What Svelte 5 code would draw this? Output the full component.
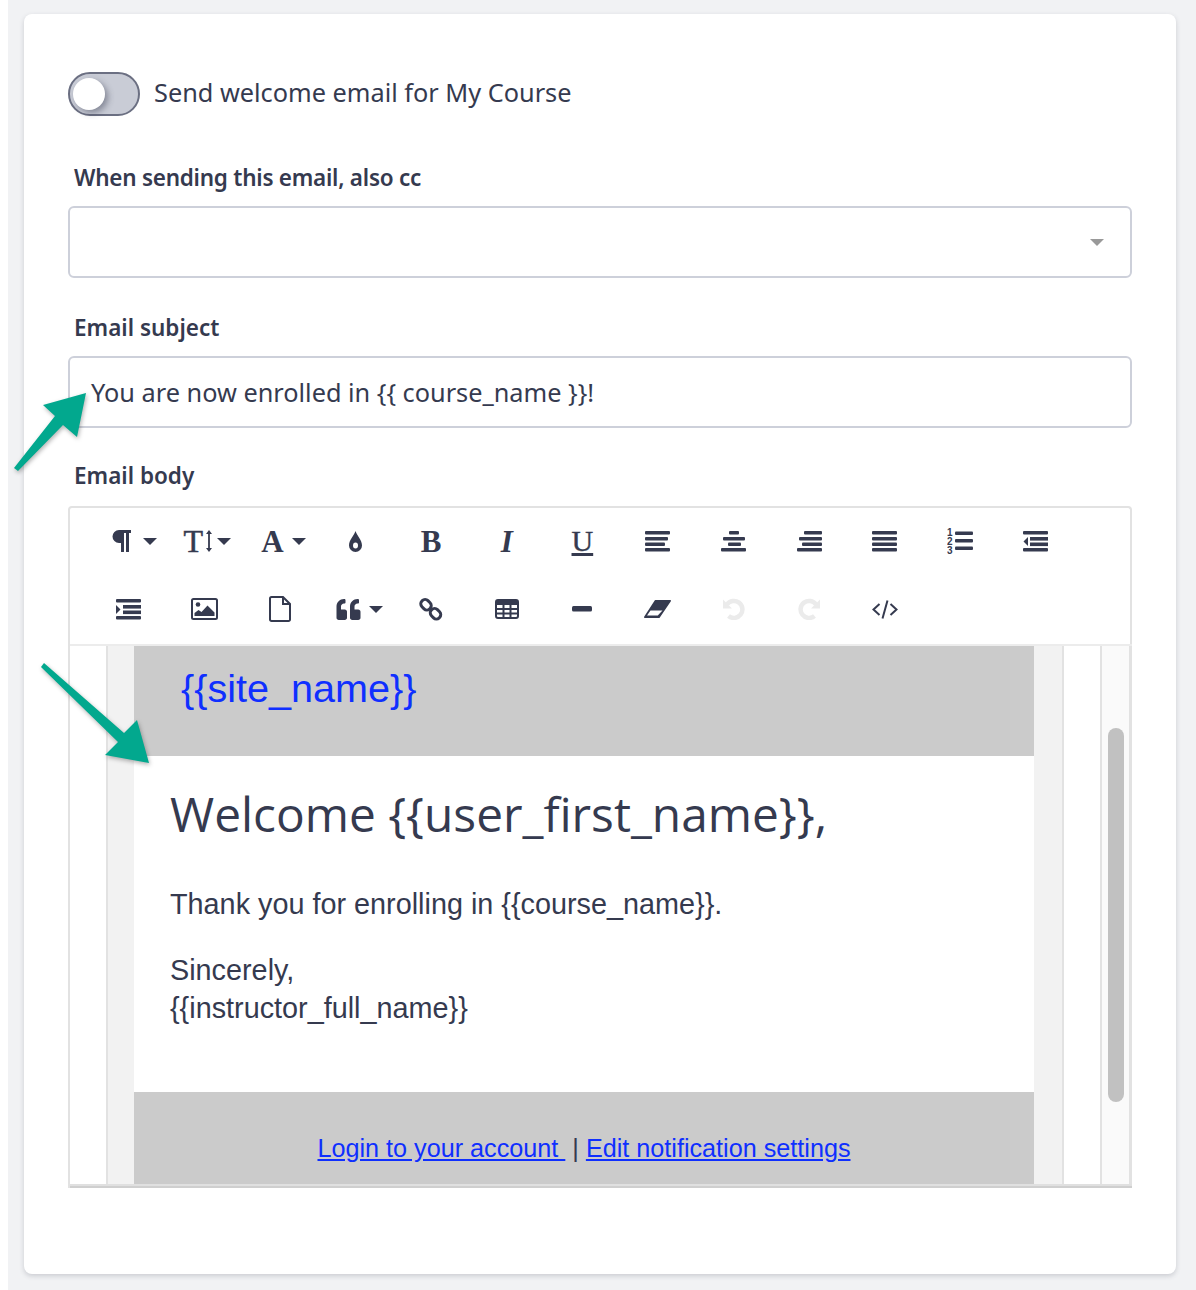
<script>
	const aligns = {
		left: [[0, 25], [0, 23], [0, 20], [0, 25]],
		center: [[8, 18], [2, 24], [7, 20], [0, 25]],
		right: [[7, 25], [2, 25], [5, 25], [0, 25]],
		justify: [[0, 25], [0, 25], [0, 25], [0, 25]]
	};
	const barY = [0, 6, 11.5, 17];
</script>

{#snippet caret()}
	<svg class="caret" width="14" height="7" viewBox="0 0 14 7"><path d="M0 0h14L7 7z" /></svg>
{/snippet}

{#snippet alignIcon(kind)}
	<svg width="25" height="21" viewBox="0 0 25 21">
		{#each aligns[kind] as bar, i}
			<rect x={bar[0]} y={barY[i]} width={bar[1] - bar[0]} height="3.6" rx="1" />
		{/each}
	</svg>
{/snippet}

<div class="page">
	<main class="card">
		<div class="toggle-row">
			<span class="toggle"><span class="knob"></span></span>
			<span class="toggle-label">Send welcome email for My Course</span>
		</div>

		<div class="label cc">When sending this email, also cc</div>
		<div class="field select">
			<svg width="14" height="7" viewBox="0 0 14 7"><path d="M0 0h14L7 7z" /></svg>
		</div>

		<div class="label subject">Email subject</div>
		<div class="field input">You are now enrolled in {'{{'} course_name {'}}'}!</div>

		<div class="label body">Email body</div>
		<div class="editor">
			<div class="toolbar">
				<span class="btn dd pad-para">
					<svg width="19" height="22" viewBox="0 0 19 22">
						<path d="M7 0h12v3h-2v18.500a.5.5 0 0 1-.5.5h-2a.5.5 0 0 1-.5-.5V3h-2v18.500a.5.5 0 0 1-.5.5h-2a.5.5 0 0 1-.5-.5V13H7A6.500 6.500 0 0 1 7 0z" />
					</svg>
					{@render caret()}
				</span>
				<span class="btn dd pad-size">
					<span class="glyph size">T</span>
					<svg class="updown" width="6" height="22" viewBox="0 0 6 22">
						<path d="M3 0l3 4H3.900v14H6l-3 4-3-4h2.100V4H0z" />
					</svg>
					{@render caret()}
				</span>
				<span class="btn dd pad-font"><span class="glyph font">A</span>{@render caret()}</span>
				<span class="btn">
					<svg width="13" height="21" viewBox="0 0 13 21">
						<path d="M6.500 0C8 5 13 9 13 14.500a6.500 6.500 0 0 1-13 0C0 9 5 5 6.500 0z" />
						<ellipse class="cut" cx="6.500" cy="14.500" rx="2.500" ry="3" />
					</svg>
				</span>
				<span class="btn"><span class="glyph bold">B</span></span>
				<span class="btn"><span class="glyph italic">I</span></span>
				<span class="btn"><span class="glyph under">U</span></span>
				<span class="btn">{@render alignIcon('left')}</span>
				<span class="btn">{@render alignIcon('center')}</span>
				<span class="btn">{@render alignIcon('right')}</span>
				<span class="btn">{@render alignIcon('justify')}</span>
				<span class="btn">
					<svg width="26" height="30" viewBox="0 0 26 30">
						<text x="0" y="10" class="num">1</text>
						<text x="0" y="19" class="num">2</text>
						<text x="0" y="28" class="num">3</text>
						<rect x="8" y="5.500" width="18" height="3.600" rx="1" />
						<rect x="8" y="13" width="18" height="3.600" rx="1" />
						<rect x="8" y="20.500" width="18" height="3.600" rx="1" />
					</svg>
				</span>
				<span class="btn">
					<svg width="25" height="21" viewBox="0 0 25 21">
						<rect width="25" height="3.600" rx="1" />
						<rect x="7" y="6" width="18" height="3.600" />
						<rect x="7" y="11.500" width="18" height="3.600" />
						<rect y="17" width="25" height="3.600" rx="1" />
						<path d="M5 6v9L0.500 10.500z" />
					</svg>
				</span>

				<span class="btn">
					<svg width="25" height="21" viewBox="0 0 25 21">
						<rect width="25" height="3.600" rx="1" />
						<rect x="7" y="6" width="18" height="3.600" />
						<rect x="7" y="11.500" width="18" height="3.600" />
						<rect y="17" width="25" height="3.600" rx="1" />
						<path d="M0 6v9l4.500-4.500z" />
					</svg>
				</span>
				<span class="btn">
					<svg width="27" height="22" viewBox="0 0 27 22">
						<rect class="line" x="1" y="1" width="25" height="20" rx="1.500" />
						<circle cx="7" cy="6.500" r="2.300" />
						<path d="M3.500 18v-3l4-3 3 2 6-6.500 7 7V18z" />
					</svg>
				</span>
				<span class="btn">
					<svg width="22" height="26" viewBox="0 0 22 26">
						<path class="line" d="M1 2.500A1.500 1.500 0 0 1 2.500 1H14l7 7v15.500a1.500 1.500 0 0 1-1.500 1.500h-17A1.500 1.500 0 0 1 1 23.500z" />
						<path class="line" d="M14 1v7h7" />
					</svg>
				</span>
				<span class="btn dd pad-quote">
					<svg width="25" height="21" viewBox="0 32 512 448">
						<path d="M464 256h-80v-64c0-35.300 28.700-64 64-64h8c13.300 0 24-10.700 24-24V56c0-13.300-10.700-24-24-24h-8c-88.400 0-160 71.600-160 160v240c0 26.500 21.500 48 48 48h128c26.500 0 48-21.500 48-48V304c0-26.500-21.500-48-48-48zm-288 0H96v-64c0-35.300 28.700-64 64-64h8c13.300 0 24-10.700 24-24V56c0-13.300-10.700-24-24-24h-8C71.600 32 0 103.600 0 192v240c0 26.500 21.500 48 48 48h128c26.500 0 48-21.500 48-48V304c0-26.500-21.500-48-48-48z" />
					</svg>
					{@render caret()}
				</span>
				<span class="btn">
					<svg width="24" height="24" viewBox="0 0 24 24">
						<rect class="line thick" x="1.500" y="3.500" width="11" height="8.500" rx="4" transform="rotate(45 7 7.750)" />
						<rect class="line thick" x="11" y="12.500" width="11" height="8.500" rx="4" transform="rotate(45 16.500 16.750)" />
					</svg>
				</span>
				<span class="btn">
					<svg width="24" height="20" viewBox="0 0 24 20">
						<rect class="line" x="1" y="1" width="22" height="18" rx="2" />
						<rect x="1" y="1" width="22" height="5" />
						<path class="line" d="M1 10h22M1 14.500h22M8.500 6V19M15.500 6V19" />
					</svg>
				</span>
				<span class="btn">
					<svg width="20" height="6" viewBox="0 0 20 6"><rect width="20" height="5.500" rx="1.500" /></svg>
				</span>
				<span class="btn">
					<svg width="27" height="18" viewBox="0 0 27 18">
						<path class="solid" d="M11.500 .8H26.200L15 17.200H.8z" />
						<path class="cut" d="M6.500 10.500h12L13.800 15.500H3z" />
					</svg>
				</span>
				<span class="btn off">
					<svg width="22" height="22" viewBox="0 0 22 22">
						<path class="arc" d="M4 6.500A8.500 8.500 0 1 1 5.500 18" />
						<path d="M0 1.500l9 9H0z" />
					</svg>
				</span>
				<span class="btn off">
					<svg width="22" height="22" viewBox="0 0 22 22">
						<path class="arc" d="M18 6.500A8.500 8.500 0 1 0 16.500 18" />
						<path d="M22 1.500l-9 9h9z" />
					</svg>
				</span>
				<span class="btn">
					<svg width="26" height="19" viewBox="0 0 26 19">
						<path class="code" d="M7.500 4L1.500 9.500l6 5.500M18.500 4l6 5.500-6 5.500M15.500 .5l-5 18" />
					</svg>
				</span>
			</div>

			<div class="frame">
				<div class="gutter"></div>
				<div class="margin"></div>
				<div class="email">
					<div class="email-head">{'{{'}site_name{'}}'}</div>
					<div class="email-main">
						<h1>Welcome {'{{'}user_first_name{'}}'},</h1>
						<p>Thank you for enrolling in {'{{'}course_name{'}}'}.</p>
						<p>Sincerely,<br />{'{{'}instructor_full_name{'}}'}</p>
					</div>
					<div class="email-foot">
						<a href="#login">Login to your account&nbsp;</a> | <a href="#settings">Edit notification settings</a>
					</div>
				</div>
				<div class="margin right"></div>
				<div class="gutter right"></div>
				<div class="track"><div class="thumb"></div></div>
			</div>
		</div>
	</main>

	<!-- annotation arrows drawn over the screenshot -->
	<svg class="arrows" width="200" height="800" viewBox="0 0 200 800">
		<polygon points="14,468 55,416 43,405 86,393 77,437 63,425 18,471" />
		<polygon points="44,663 124,733 137,720 149,763 105,755 118,742 41,667" />
	</svg>
</div>

<style>
	:global(body) {
		margin: 0;
		background: #fff;
	}

	.page {
		position: relative;
		box-sizing: border-box;
		width: 1188px;
		height: 1290px;
		margin-left: 8px;
		padding: 14px 20px 16px 16px;
		background: #f1f2f4;
		font-family: "Noto Sans", sans-serif;
		color: #353a4f;
	}

	.card {
		box-sizing: border-box;
		height: 1260px;
		padding: 58px 44px 0;
		background: #fff;
		border-radius: 8px;
		box-shadow: 0 2px 5px rgba(50, 55, 75, 0.2);
	}

	.toggle-row {
		display: flex;
		align-items: center;
		gap: 14px;
		height: 44px;
	}

	.toggle {
		box-sizing: border-box;
		display: block;
		position: relative;
		width: 72px;
		height: 44px;
		border: 2px solid #6b6f82;
		border-radius: 22px;
		background: #c9ccd6;
	}

	.knob {
		position: absolute;
		left: 3px;
		top: 4px;
		width: 32px;
		height: 32px;
		border-radius: 50%;
		background: #fff;
		box-shadow: 3px 3px 6px rgba(50, 55, 75, 0.45);
	}

	.toggle-label {
		font-size: 25.3px;
		line-height: 44px;
		margin-top: -4px;
	}

	.label {
		margin-left: 6px;
		font-size: 22.5px;
		font-weight: 600;
		line-height: 30px;
	}

	.cc {
		margin-top: 47px;
		margin-bottom: 13px;
		letter-spacing: -0.25px;
	}

	.subject {
		margin-top: 35px;
		margin-bottom: 13px;
	}

	.body {
		margin-top: 33px;
		margin-bottom: 15px;
	}

	.field {
		box-sizing: border-box;
		display: flex;
		align-items: center;
		height: 72px;
		border: 2px solid #cdd0da;
		border-radius: 6px;
		background: #fff;
	}

	.select {
		justify-content: flex-end;
		padding-right: 26px;
	}

	.select path {
		fill: #999;
	}

	.input {
		padding: 0 0 1px 21px;
		font-size: 25.3px;
	}

	.editor {
		box-sizing: border-box;
		height: 682px;
		border: 2px solid #e2e2e2;
		border-bottom: 0;
		border-radius: 4px 4px 0 0;
	}

	.toolbar {
		box-sizing: border-box;
		display: grid;
		grid-template-columns: repeat(13, 75.6px);
		grid-auto-rows: 68px;
		height: 136px;
		padding-left: 21px;
	}

	.btn {
		display: flex;
		align-items: center;
		justify-content: center;
		padding-bottom: 2px;
	}

	.btn svg {
		display: block;
		fill: #353a4f;
	}

	.btn.dd {
		justify-content: flex-start;
	}

	.pad-para {
		padding-left: 21px;
	}

	.pad-size {
		padding-left: 17px;
	}

	.pad-font {
		padding-left: 19px;
	}

	.pad-quote {
		padding-left: 18px;
	}

	.caret {
		margin-left: 8px;
	}

	.pad-para .caret {
		margin-left: 12px;
	}

	.updown {
		margin-left: 3px;
	}

	.pad-size .caret {
		margin-left: 5px;
	}

	.glyph {
		font-family: "Liberation Serif", serif;
		font-size: 31px;
		font-weight: 700;
		line-height: 1;
	}

	.size {
		font-weight: 400;
		font-size: 32px;
		-webkit-text-stroke: 0.5px #353a4f;
	}

	.italic {
		font-style: italic;
	}

	.under {
		text-decoration: underline;
		text-underline-offset: 2px;
		font-weight: 400;
		font-size: 30px;
		-webkit-text-stroke: 0.4px #353a4f;
	}

	.btn .cut {
		fill: #fff;
	}

	.btn .solid {
		stroke: #353a4f;
		stroke-width: 1.6;
		stroke-linejoin: round;
	}

	.btn .line {
		fill: none;
		stroke: #353a4f;
		stroke-width: 2;
	}

	.btn .thick {
		stroke-width: 3;
	}

	.btn .num {
		font-family: "Liberation Sans", sans-serif;
		font-size: 10px;
		font-weight: 700;
	}

	.btn .code {
		fill: none;
		stroke: #353a4f;
		stroke-width: 2;
	}

	.btn.off svg {
		fill: #ebebeb;
	}

	.btn .arc {
		fill: none;
		stroke: #ebebeb;
		stroke-width: 4.5;
	}

	.frame {
		box-sizing: border-box;
		display: flex;
		height: 544px;
		margin-right: -2px;
		padding-bottom: 2px;
		overflow: hidden;
		border-top: 2px solid #ececec;
		border-bottom: 2px solid #cfcfcf;
		background: #e0e0e0;
		font-family: "Liberation Sans", sans-serif;
	}

	.gutter {
		width: 36px;
		background: #fff;
		border-right: 2px solid #e2e2e2;
		flex: none;
	}

	.gutter.right {
		border-left: 2px solid #e2e2e2;
	}

	.margin {
		width: 26px;
		flex: none;
		background: #f2f2f2;
	}

	.margin.right {
		width: 28px;
	}

	.email {
		width: 900px;
		flex: none;
		background: #fff;
		display: flex;
		flex-direction: column;
	}

	.email-head {
		box-sizing: border-box;
		height: 110px;
		padding: 17px 0 0 47px;
		background: #cbcbcb;
		color: #0f2fff;
		font-size: 39.6px;
		line-height: 50px;
	}

	.email-main {
		height: 336px;
		padding-left: 36px;
		box-sizing: border-box;
		font-size: 28.8px;
		line-height: 38px;
	}

	.email-main h1 {
		margin: 26px 0 0;
		font-family: "Open Sans", sans-serif;
		font-size: 47.8px;
		font-weight: 400;
		line-height: 64px;
	}

	.email-main p {
		margin: 0 0 28px;
	}

	.email-main h1 + p {
		margin-top: 39px;
	}

	.email-foot {
		flex: 1;
		padding-top: 39px;
		background: #cbcbcb;
		text-align: center;
		font-size: 25.2px;
		line-height: 34px;
	}

	.email-foot a {
		color: #0f2fff;
	}

	.track {
		flex: 1;
		position: relative;
		background: #fafafa;
		border-right: 3px solid #e2e2e2;
	}

	.thumb {
		position: absolute;
		left: 6px;
		top: 82px;
		width: 16px;
		height: 374px;
		border-radius: 8px;
		background: #c1c1c1;
	}

	.arrows {
		position: absolute;
		left: -8px;
		top: 0;
		overflow: visible;
		pointer-events: none;
		fill: #02a88e;
		filter: drop-shadow(1px 2px 2px rgba(0, 0, 0, 0.3));
	}
</style>
